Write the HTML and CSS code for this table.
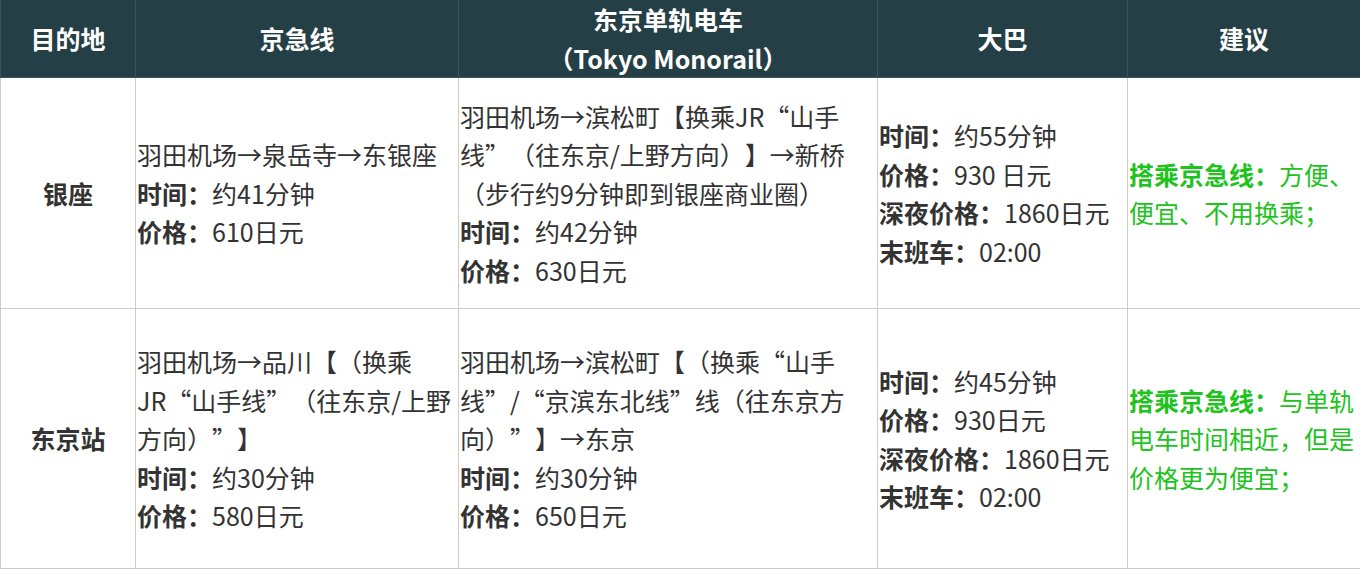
FILE: index.html
```html
<!DOCTYPE html>
<html lang="zh-CN">
<head>
<meta charset="utf-8">
<title>羽田机场交通</title>
<link rel="stylesheet" href="styles.css">
</head>
<body>
<table class="route-table">
  <colgroup>
    <col class="c-dest">
    <col class="c-keikyu">
    <col class="c-mono">
    <col class="c-bus">
    <col class="c-tip">
  </colgroup>
  <thead>
    <tr class="head-row">
      <th>目的地</th>
      <th>京急线</th>
      <th>东京单轨电车<br>（Tokyo Monorail）</th>
      <th>大巴</th>
      <th>建议</th>
    </tr>
  </thead>
  <tbody>
    <tr class="row-ginza">
      <td class="dest">银座</td>
      <td>羽田机场→泉岳寺→东银座<br><b>时间：</b>约41分钟<br><b>价格：</b>610日元</td>
      <td>羽田机场→滨松町【换乘JR“山手线”（往东京/上野方向）】→新桥（步行约9分钟即到银座商业圈）<br><b>时间：</b>约42分钟<br><b>价格：</b>630日元</td>
      <td><b>时间：</b>约55分钟<br><b>价格：</b>930 日元<br><b>深夜价格：</b>1860日元<br><b>末班车：</b>02:00</td>
      <td class="tip"><b>搭乘京急线：</b>方便、便宜、不用换乘；</td>
    </tr>
    <tr class="row-tokyo">
      <td class="dest">东京站</td>
      <td>羽田机场→品川【（换乘JR“山手线”（往东京/上野方向）”】<br><b>时间：</b>约30分钟<br><b>价格：</b>580日元</td>
      <td>羽田机场→滨松町【（换乘“山手线”/“京滨东北线”线（往东京方向）”】→东京<br><b>时间：</b>约30分钟<br><b>价格：</b>650日元</td>
      <td><b>时间：</b>约45分钟<br><b>价格：</b>930日元<br><b>深夜价格：</b>1860日元<br><b>末班车：</b>02:00</td>
      <td class="tip"><b>搭乘京急线：</b>与单轨电车时间相近，但是价格更为便宜；</td>
    </tr>
  </tbody>
</table>
</body>
</html>
```

FILE: styles.css
```css
html, body {
  margin: 0;
  padding: 0;
  background: #ffffff;
}

body {
  font-family: "Noto Sans CJK SC", "Noto Sans", sans-serif;
  font-size: 25px;
  line-height: 38.5px;
  color: #333333;
  text-spacing-trim: space-all;
}

.route-table {
  width: 1360px;
  border-collapse: collapse;
  table-layout: fixed;
}

.c-dest { width: 135px; }
.c-keikyu { width: 323px; }
.c-mono { width: 419px; }
.c-bus { width: 250px; }
.c-tip { width: 233px; }

.route-table th,
.route-table td {
  padding: 0 1px;
  vertical-align: middle;
  word-break: normal;
  text-spacing-trim: space-all;
}

.route-table th {
  background: #253f47;
  color: #ffffff;
  font-weight: 700;
  text-align: center;
  border: 1px solid #3c545c;
  border-top: none;
  height: 77px;
}

.route-table td {
  border: 1px solid #cccccc;
  text-align: left;
}

.route-table td b {
  font-weight: 700;
}

.route-table td.dest {
  text-align: center;
  font-weight: 700;
}

.row-ginza td {
  height: 230px;
}

.row-tokyo td {
  height: 259px;
}

.route-table td.tip {
  color: #1ec31e;
}
```
